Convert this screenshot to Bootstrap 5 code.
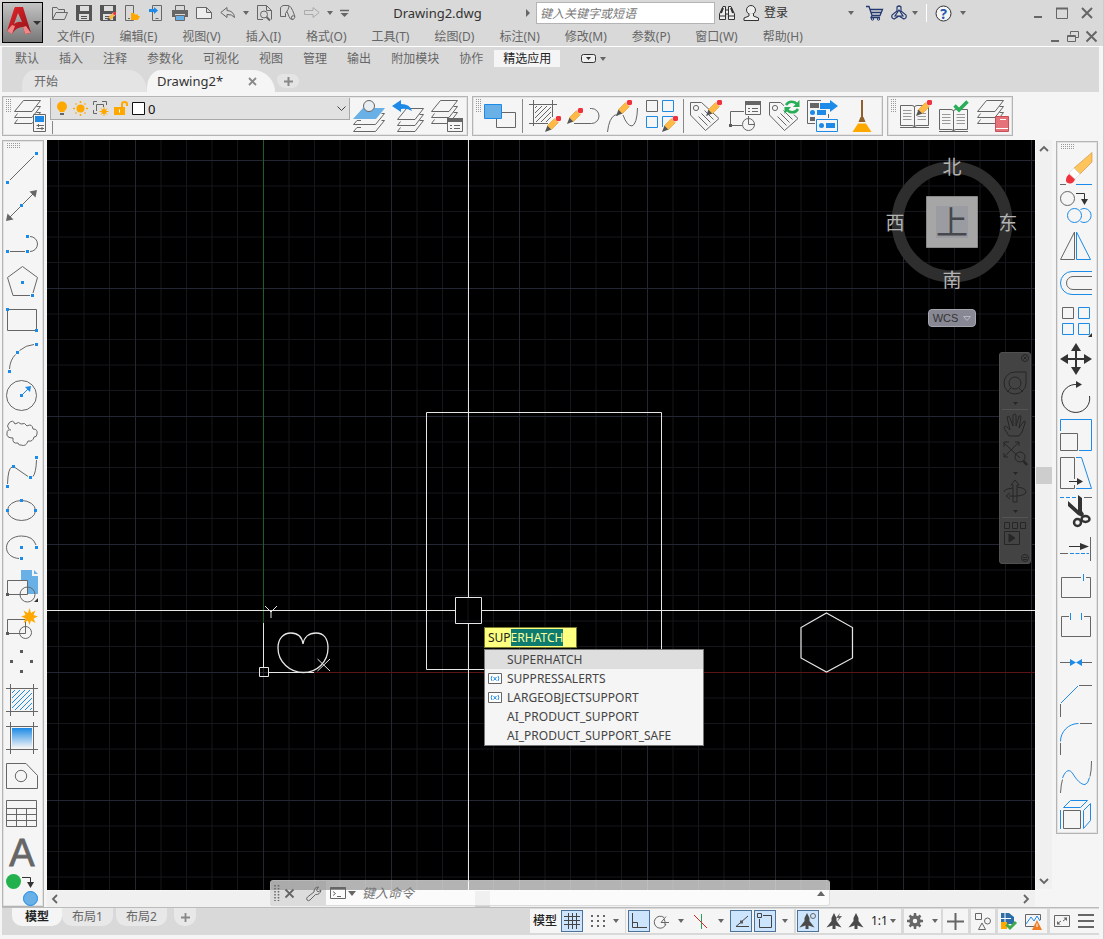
<!DOCTYPE html>
<html lang="zh-CN">
<head>
<meta charset="utf-8">
<meta name="viewport" content="width=device-width, initial-scale=1">
<title>Drawing2.dwg</title>
<link href="https://cdn.jsdelivr.net/npm/bootstrap@5.3.0/dist/css/bootstrap.min.css" rel="stylesheet">
<style>
body{font:12px/16px "Noto Sans","Noto Sans CJK SC",sans-serif;background:#f5f5f5;color:#666;overflow:hidden}
button{padding:0;border:0;background:none;color:inherit;font:inherit;line-height:0;flex:none}
a{color:inherit;text-decoration:none}
svg{display:block;fill:none;stroke:#666;stroke-width:1;flex:none;overflow:visible}
svg text{stroke:none}
.bl{stroke:#1c8ae6}
.kn{stroke:#1c8ae6;stroke-width:3;stroke-linecap:square}
.kg{stroke:#5a5a5a;stroke-width:3;stroke-linecap:square}
.fb{fill:#1c8ae6;stroke:none}
.fl{fill:#68b0e6;stroke:none}
.fg{fill:#666;stroke:none}
.fd{fill:#333;stroke:none}
.sd{stroke:#333}
.fo{fill:#ffa800;stroke:none}
.so{stroke:#ffa800}
.wf{fill:#f5f5f5}
.caret{width:0;height:0;border:3px solid transparent;border-top:4px solid #666;border-bottom:0;flex:none}

.topbar{background:#d9d9d9;border-bottom:1px solid #fff;padding:0 4px 0 2px;height:47px}
.logo{width:41px;height:41px;margin-top:2px;border:1px solid #000;background:linear-gradient(#c4c4c4,#777)}
.qrow{height:26px}
.quick{gap:8px;padding-left:9px;width:308px}
.doc-title{font-size:13px;color:#333;text-align:center}
.find{width:179px;height:22px;border:1px solid #b4b4b4;background:#fff;font-style:italic;padding:0 3px;color:#666;outline:0;border-radius:0}
.find::placeholder,.cmd input::placeholder{color:#777;opacity:1}
.info{gap:8px;color:#333;padding-left:4px;width:251px}
.mrow{height:21px;gap:25px;padding-left:14px}
.band{background:#d9d9d9;margin:0 4px 0 2px}
.rtabs{height:23px;padding:0 3px}
.rtabs a{padding:0 9px;margin:0 1px;line-height:17px}
.rtabs a.on{background:#f5f5f5;color:#222}
.ftabs{height:22px;padding-left:20px}
.ftab{height:22px;line-height:24px;background:#e4e4e4;border-radius:12px 18px 0 0/16px 22px 0 0;padding-left:12px;width:125px}
.ftab.on{background:#f5f5f5;color:#333;font-size:13px;width:128px;border-radius:14px 22px 0 0/18px 22px 0 0;padding:0 18px 0 10px}
.ftab.plus{width:22px;height:14px;margin-left:2px;border-radius:6px 8px 8px 10px;padding:0}

.bars{padding:4px 2px;gap:4px}
.tbar{border:1px solid #b4b4b4;height:40px;outline:1px solid #e4e4e4;outline-offset:-2px}
.tools{padding:0 3px 0 2px;gap:7px}
.grip-v{width:6px;height:14px;background:conic-gradient(#999 25%,transparent 0) 0 0/2px 2px;align-self:flex-start;margin:2px -4px 0 0;flex:none}
.grip-h{width:14px;height:6px;background:conic-gradient(#999 25%,transparent 0) 0 0/2px 2px;margin:0 0 3px;flex:none;align-self:flex-start}
.vr1{width:1px;height:34px;background:#888;flex:none}
.tools > .vr1{margin:0 -2px 0 -1px}
.layer{width:300px;height:23px;border:1px solid #a8a8a8;background:#e1e1e1;padding:0 3px 0 5px;gap:5px}
.layer select{appearance:none;border:0;background:none;padding:0;margin-left:-2px;color:#111;font-size:13px;line-height:20px;outline:0}

.side{width:42px;border:1px solid #b4b4b4;box-shadow:inset 0 0 0 1px #e2e2e2;padding:2px 3px 0;gap:6px;flex:none}
.side button{margin-right:2px}
.view{background:#000;min-width:0;min-height:0}
.vs{width:16px;background:#f0f0f0;margin:0 0 0 1px;padding:5px 1px 4px 0}
.hs{height:16px;background:#f0f0f0;margin-top:1px;padding:0 5px 0 4px}
.thumb-v{height:17px;width:16px;background:#cdcdcd;position:absolute;top:327px;left:0}
.thumb-h{height:16px;width:15px;background:#cdcdcd;position:absolute;left:428px;top:0}

.entry{position:absolute;left:437px;top:487px;width:220px}
.entry input{width:93px;height:21px;border:1px solid #77772c;border-radius:0;background:#ffff80;color:#222;padding:0 3px;outline:0;display:block;font-size:12px}
.entry input::selection{background:#0d7b70;color:#ffff9a}
.sugg{border:1px solid #777;background:#f5f5f5;margin-top:1px;color:#444}
.sugg button{height:19px;line-height:19px;padding-left:3px;gap:5px;text-align:left}
.sugg .sel{background:#dedede}
.sugg i{width:14px;flex:none}
.cube{position:absolute;right:14px;top:10px}
.wcs{position:absolute;right:59px;top:169px;width:48px;height:18px;border:1px solid #a5a5b0;border-radius:4px;background:#888894;color:#333;font:11px/14px "Liberation Sans",sans-serif;gap:5px}
.navbar2{position:absolute;right:4px;top:212px;width:32px;height:212px;background:#434343;border-radius:3px;border:1px solid #505050}
.navbar2 svg{stroke:#262626}
.cmd{position:absolute;left:223px;bottom:1px;width:560px;height:26px;background:rgba(255,255,255,.7);border:1px solid rgba(190,190,190,.5);border-radius:3px}
.cmd .hnd{width:55px;height:24px;background:rgba(150,150,150,.3);gap:12px;padding-left:3px}
.cmd input{background:none;border:0;outline:0;font-style:italic;font-size:13px;padding:0;height:20px}

.foot{background:#d9d9d9;margin:0 4px 4px 2px;height:28px;border-top:1px solid #bbb}
.ltab{height:18px;line-height:17px;background:#e8e8e8;padding:0 10px;border-radius:0 0 10px 10px;margin-right:3px;width:51px;text-align:center}
.ltab.on{background:#f5f5f5;color:#222;font-weight:600;margin:0;margin-left:10px;width:50px}
.stat{gap:3px;padding-top:1px}
.grp{background:#f5f5f5;height:24px;padding:0 3px}
.tg{width:22px;height:22px;display:flex;align-items:center;justify-content:center}
.tg.on{background:#cce4fc;border:1px solid #4d7299}
.page-edge{border-right:1px solid #ccc}
</style>
</head>
<body class="d-flex flex-column vh-100 page-edge">

<svg width="0" height="0" class="position-absolute" aria-hidden="true">
<defs>
<symbol id="pencil" viewBox="0 0 16 16"><path fill="#555" stroke="none" d="M0 16 2.500 9.500 6.500 13.500Z"/><path fill="#ffba45" stroke="#d99a30" stroke-width=".6" d="M2.500 9.500 9.500 2.500 13.500 6.500 6.500 13.500Z"/><path fill="#fff" stroke="none" d="M9.500 2.500 11.500.5 15.500 4.500 13.500 6.500Z"/><circle cx="13.500" cy="2.500" r="2.800" fill="#f0323c" stroke="none"/></symbol>
<symbol id="layers" viewBox="0 0 32 32"><path d="M9.500.5H26.500L18 11.500H.5ZM22.500 6.500H26.500L18 17.500H.5L3.500 13.500M22.500 12.500H26.500L18 23.500H.5L3.500 19.500"/></symbol>
<symbol id="tag" viewBox="0 0 32 32"><path d="M1.500 2.500H12.500L30 18.500 16.500 30.500 1.500 15ZM9.500 16.500 18.500 25.500M12.500 13.500 21.500 22.500M15.500 10.500 24.500 19.500"/><circle cx="7" cy="8" r="2.600"/></symbol>
<symbol id="panel" viewBox="0 0 16 14"><path class="wf" d="M.5.5H15.500V13.500H.5Z"/><path class="fg" d="M0 0H16V4H0Z"/><path d="M3 7.500H5M7 7.500H13M3 10.500H5M7 10.500H13" /></symbol>
<symbol id="book" viewBox="0 0 32 24"><path d="M1.500.5H13Q15.500.5 15.500 2.500Q15.500.5 18 .5H29.500V20.500H18Q15.500 20.500 15.500 22.500Q15.500 20.500 13 20.500H1.500ZM15.500 2V22"/><path stroke="#999" d="M4 5.500H12.500M4 8.500H12.500M4 11.500H12.500M4 14.500H12.500M18.500 5.500H27M18.500 8.500H27M18.500 11.500H27M18.500 14.500H27"/><path d="M1 22.500H30"/></symbol>
<symbol id="disk" viewBox="0 0 16 16"><path fill="#555" stroke="none" d="M0 0H16V16H1L0 15Z"/><path fill="#ddd" stroke="none" d="M4 1H13V6H4ZM3 9H13V15H3Z"/><path stroke="#555" d="M5 11.500H11M5 13.500H11"/></symbol>
<symbol id="comp" viewBox="0 0 16 16"><path fill="#4a4a4a" stroke="none" d="M8 0 10.500 5V8L15.500 14.500 9.500 12.500 9.500 16H6.500V12.500L.5 14.500 5.500 8V5Z"/></symbol>
<pattern id="hatch" width="5" height="5" patternUnits="userSpaceOnUse"><path d="M-1 6 6-1M-1 1 1-1M4 6 6 4" class="bl"/></pattern>
<pattern id="hatchg" width="5" height="5" patternUnits="userSpaceOnUse"><path d="M-1 6 6-1M-1 1 1-1M4 6 6 4" stroke="#666"/></pattern>
<linearGradient id="gr" x2="0" y2="1"><stop stop-color="#1c8ae6"/><stop offset="1" stop-color="#f5f5f5"/></linearGradient>
<linearGradient id="ar" x2="1" y2="1"><stop stop-color="#e8262c"/><stop offset="1" stop-color="#8c1218"/></linearGradient>
</defs></svg>

<header class="topbar d-flex">
  <button class="logo d-flex align-items-center" aria-label="应用程序菜单">
    <svg width="39" height="39"><path fill="url(#ar)" stroke="none" d="M12 4H20L28 30 22 31 20 24Q13 24 9 31L4 28 11 6ZM15 10 11 21Q15 18 19 19Z"/><path stroke="none" fill="#e88" d="M4 28 9 22 12 23 9 31ZM20 24 23 23 28 30 22 31Z"/><path fill="#333" stroke="none" d="M30 18H38L34 22Z"/></svg>
  </button>
  <div class="flex-grow-1">
    <div class="qrow d-flex align-items-center">
      <div class="quick d-flex align-items-center">
        <button aria-label="打开"><svg width="16" height="16"><path d="M.5 14.500V2.500H5L6.500 4.500H12.500V7.500M.5 14.500 4 7.500H15.500L12.500 14.500Z"/></svg></button>
        <button aria-label="保存"><svg width="16" height="16"><use href="#disk"/></svg></button>
        <button aria-label="另存为"><svg width="16" height="16"><use href="#disk"/><use href="#pencil" x="7" y="7" width="9" height="9"/></svg></button>
        <button aria-label="从移动设备打开"><svg width="16" height="16"><path d="M1.500.5H9.500V15.500H1.500ZM4 13.500H6"/><path class="fo" d="M7 14V8H10L11 9.500H14V11H16L14 15H7Z"/></svg></button>
        <button aria-label="保存到移动设备"><svg width="16" height="16"><path d="M4.500.5H13.500V15.500H4.500ZM7.500 13.500H10.500"/><path class="fb" d="M1 4H6V2L10 5.500 6 9V7H1Z"/></svg></button>
        <button aria-label="打印"><svg width="16" height="16"><path d="M3.500 6V.5H12.500V6"/><path class="fg" d="M0 5H16V12H13V9H3V12H0Z"/><path fill="#68b0e6" d="M3.500 10.500H12.500V15.500H3.500Z"/></svg></button>
        <button aria-label="新建"><svg width="16" height="16"><path fill="#eee" d="M.5 2.500H10.500L15.500 7.500V13.500H.5ZM10.500 2.500V7.500H15.500"/></svg></button>
        <button aria-label="放弃"><svg width="16" height="16"><path d="M7 2.500 .8 7.500 7 12.500V9.500Q12 9 14.500 12.500Q14 6 7 5.500Z"/></svg></button>
        <span class="caret" style="margin:0 -1px"></span>
        <button aria-label="查找"><svg width="16" height="16"><path d="M7 14.500H1.500V.5H10.500L15.500 5.500V14.500M10.500.5V5.500H15.500"/><circle cx="8" cy="9.500" r="3.500"/><path stroke-width="2" d="M10.500 12 14 15.500"/></svg></button>
        <button aria-label="特性匹配"><svg width="16" height="16"><path d="M5 11.500H.5V2.500L3 .5H8Q10 1 8 4.500L5.500 8.500V12M8 .5Q11 .5 14 9Q16 13 13 14.500Q10 15 9 11.500L7 6.500M12.500 14.500Q10.500 13 12 11Q14 10 15 12"/></svg></button>
        <button aria-label="重做"><svg width="16" height="16" style="stroke:#aaa"><path d="M9 2.500 15.200 7.500 9 12.500V9.500H.5V5.500H9Z"/></svg></button>
        <span class="caret" style="margin:0 -1px"></span>
        <button aria-label="自定义"><svg width="9" height="8"><path d="M0 1.500H9" stroke-width="1.500"/><path class="fg" d="M.5 4H8.500L4.500 8Z"/></svg></button>
      </div>
      <div class="doc-title flex-grow-1 ps-1">Drawing2.dwg</div>
      <svg width="16" height="8"><path class="fg" d="M6 0 10 4 6 8Z"/></svg>
      <input class="find" type="text" aria-label="搜索" placeholder="键入关键字或短语">
      <div class="info d-flex align-items-center">
        <button aria-label="搜索"><svg width="16" height="16"><path class="sd" fill="#eee" d="M2.500 5 4 1.500H6.500V14.500H.5V9ZM13.500 5 12 1.500H9.500V14.500H15.500V9ZM6.500 5H9.500V9H6.500M.5 11H6.500M9.500 11H15.500"/><path class="sd" stroke-width="2" d="M2 8 4 3M14 8 12 3"/></svg></button>
        <button class="d-flex align-items-center gap-1" aria-label="登录"><svg width="17" height="16"><circle cx="8" cy="5" r="4.500" class="sd" fill="#eee"/><path class="sd" fill="#eee" d="M6 9V11L1 13V15.500H15.500V13L10.500 11V9"/></svg><span>登录</span></button>
        <span class="caret ms-auto"></span>
        <button aria-label="商店" class="ms-1"><svg width="17" height="16"><path style="stroke:#243a70" stroke-width="1.300" d="M0 1.500H3L6 10.500H14L16.500 4.500H4.500M5 7.500H15M6 10.500 5 12.500H14"/><circle cx="6.500" cy="14" r="1.200" style="stroke:#243a70"/><circle cx="12.500" cy="14" r="1.200" style="stroke:#243a70"/></svg></button>
        <button aria-label="Autodesk"><svg width="16" height="16" style="stroke:#243a70"><path stroke-width="1.200" d="M6 2Q8 0 10 2V6L15 10Q16 13 13 14L8 11 3 14Q0 13 1 10L6 6ZM8 5 12 11H4Z"/></svg></button>
        <span class="caret" style="margin-left:-3px"></span>
        <span class="border-start border-white" style="height:18px"></span>
        <button aria-label="帮助"><svg width="17" height="17"><circle cx="8.500" cy="8.500" r="7.500" style="stroke:#333" fill="#f5f5f5"/><text x="8.500" y="13.500" text-anchor="middle" font-size="14" font-weight="700" fill="#2458b0">?</text></svg></button>
        <span class="caret"></span>
      </div>
      <div class="d-flex align-items-center ms-auto" style="gap:13px;padding:0 6px 0 68px">
        <button aria-label="最小化"><svg width="9" height="12"><path stroke-width="2" d="M0 10H8"/></svg></button>
        <button aria-label="最大化"><svg width="12" height="12"><path d="M.5 1.500H11.500V11.500H.5Z"/><path d="M0 1.500H12" stroke-width="2"/></svg></button>
        <button aria-label="关闭"><svg width="12" height="12"><path stroke-width="2" d="M1 1 11 11M11 1 1 11"/></svg></button>
      </div>
    </div>
    <nav class="mrow d-flex align-items-center" aria-label="菜单栏">
      <a href="#">文件(F)</a><a href="#">编辑(E)</a><a href="#">视图(V)</a><a href="#">插入(I)</a><a href="#">格式(O)</a><a href="#">工具(T)</a><a href="#">绘图(D)</a><a href="#">标注(N)</a><a href="#">修改(M)</a><a href="#">参数(P)</a><a href="#">窗口(W)</a><a href="#">帮助(H)</a>
      <div class="d-flex ms-auto align-items-center" style="gap:7px;padding-right:2px">
        <button aria-label="最小化文档"><svg width="9" height="11"><path stroke-width="2" d="M0 10H8"/></svg></button>
        <button aria-label="还原文档"><svg width="12" height="11"><path d="M3.500 3.500V.5H11.500V6.500H9M.5 4.500H8.500V10.500H.5ZM.5 5.500H8.500"/></svg></button>
        <button aria-label="关闭文档"><svg width="11" height="11"><path stroke-width="2" d="M.5.5 10.500 10.500M10.500.5.5 10.500"/></svg></button>
      </div>
    </nav>
  </div>
</header>

<div class="band">
  <nav class="rtabs d-flex align-items-center" aria-label="功能区">
    <a href="#">默认</a><a href="#">插入</a><a href="#">注释</a><a href="#">参数化</a><a href="#">可视化</a><a href="#">视图</a><a href="#">管理</a><a href="#">输出</a><a href="#">附加模块</a><a href="#">协作</a><a href="#" class="on">精选应用</a>
    <button class="d-flex align-items-center gap-1 ms-3 ps-1" aria-label="显示选项"><svg width="15" height="9"><rect x=".5" y=".5" width="14" height="8" rx="2" class="sd" fill="#eee"/><path class="fd" d="M5 3H10L7.500 6Z"/></svg><span class="caret"></span></button>
  </nav>
  <nav class="ftabs d-flex" aria-label="文件选项卡">
    <a href="#" class="ftab">开始</a>
    <div class="ftab on d-flex align-items-center justify-content-between"><a href="#">Drawing2*</a><button aria-label="关闭"><svg width="9" height="9"><path stroke-width="1.800" stroke="#888" d="M1 1 8 8M8 1 1 8"/></svg></button></div>
    <button class="ftab plus d-flex align-items-center justify-content-center align-self-end mb-1" aria-label="新图形"><svg width="9" height="9"><path stroke-width="2" stroke="#888" d="M4.500 0V9M0 4.500H9"/></svg></button>
  </nav>
</div>

<div class="bars d-flex">
  <div class="tbar tools d-flex align-items-center" style="width:466px">
    <span class="grip-v"></span>
    <button aria-label="图层特性"><svg width="32" height="32"><use href="#layers" width="32" height="32"/><path class="wf" d="M19.500 14.500H31.500V31.500H19.500Z"/><path class="fb" d="M21 16H30V22H21Z"/><path d="M22.500 25.500H30M22.500 28.500H30M24.500 24V27M28 27V30"/></svg></button>
    <div class="align-self-start" style="margin-left:-3px">
      <div class="layer d-flex align-items-center">
        <svg width="12" height="15"><circle cx="6" cy="5.500" r="5" class="fo"/><path class="fo" d="M3.500 9H8.500V11H3.500Z"/><path class="fg" d="M4 12H8V14H4Z"/></svg>
        <svg width="15" height="15"><circle cx="7.500" cy="7.500" r="4" class="fo"/><path class="so" stroke-width="1.500" d="M7.500 0V2M7.500 13V15M0 7.500H2M13 7.500H15M2.500 2.500 3.500 3.500M11.500 11.500 12.500 12.500M2.500 12.500 3.500 11.500M11.500 3.500 12.500 2.500"/></svg>
        <svg width="16" height="15"><path d="M.5 4V.5H4M9 .5H13.500V4M.5 9V12.500H4M3.500 10V3.500H10.500V6"/><circle cx="11" cy="10.500" r="2.500" class="fo"/><path class="so" d="M11 6V15M6.500 10.500H15.500M8 7.500 14 13.500M14 7.500 8 13.500"/></svg>
        <svg width="14" height="15"><path class="fo" d="M0 6H11V14H0Z"/><path class="so" stroke-width="2" d="M8 6V3Q8 1 10.500 1Q13 1 13 3V5"/><path stroke="#fff" d="M5.500 8.500V11.500"/></svg>
        <svg width="13" height="13" style="margin-left:-1px"><path style="stroke:#111" fill="#fff" d="M.5.5H12.500V12.500H.5Z"/></svg>
        <select class="flex-grow-1" aria-label="图层"><option>0</option></select>
        <svg width="9" height="6"><path stroke="#444" d="M.5.5 4.500 4.500 8.500.5"/></svg>
      </div>
      <div class="vr1" style="height:13px;margin:1px 0 0 2px"></div>
    </div>
    <button aria-label="图层匹配" style="margin-left:-4px"><svg width="32" height="32"><path class="fl" d="M10 8H32L23 19H0Z"/><circle cx="16" cy="6" r="5.500" fill="#e9eef2"/><path d="M28.500 13.500H31.500L22.500 24.500H.5L4 20.500H8M28.500 20.500H31.500L22.500 31.500H.5L4 27.500H8"/></svg></button>
    <button aria-label="上一个图层"><svg width="32" height="32"><g transform="translate(5 8)"><use href="#layers" width="32" height="32"/></g><path fill="#f5f5f5" stroke="none" d="M0 0H17V7H0Z"/><path class="fb" d="M0 6 9 0V4Q18 4 20 11Q15 8 9 9V12Z"/></svg></button>
    <button aria-label="图层状态"><svg width="32" height="32"><use href="#layers" width="32" height="32"/><use href="#panel" x="16" y="18" width="16" height="14"/></svg></button>
  </div>

  <div class="tbar tools d-flex align-items-center pe-1">
    <span class="grip-v"></span>
    <button aria-label="绘图次序"><svg width="32" height="32"><path d="M12.500 12.500H31.500V27.500H12.500Z"/><path fill="#68b0e6" class="bl" d="M.5 4.500H17.500V18.500H.5Z"/></svg></button>
    <span class="vr1"></span>
    <button aria-label="编辑图案填充"><svg width="32" height="32"><path fill="url(#hatchg)" stroke="none" d="M7 6H23V22H7Z"/><path d="M5.500 0V26M24.500 0V17M1 4.500H29M1 23.500H20"/><use href="#pencil" x="17" y="16" width="16" height="16"/></svg></button>
    <button aria-label="编辑多段线"><svg width="32" height="32"><path d="M7 23.500H24.500A7.500 7.500 0 0 0 24.500 8.500H23"/><use href="#pencil" y="8" width="16" height="16"/></svg></button>
    <button aria-label="编辑样条曲线"><svg width="32" height="32"><path d="M1.500 32Q3 18 9 15H12M17 15Q21 26 26 26Q31 24 31.500 8"/><use href="#pencil" x="10" width="16" height="16"/></svg></button>
    <button aria-label="编辑阵列"><svg width="32" height="32"><path d="M1.500.5H12.500V11.500H1.500Z"/><path class="bl" d="M17.500.5H28.500V11.500H17.500ZM1.500 16.500H12.500V27.500H1.500ZM17.500 27V16.500H28.500"/><use href="#pencil" x="17" y="16" width="16" height="16"/></svg></button>
    <span class="vr1"></span>
    <button aria-label="编辑属性" class="me-1"><svg width="32" height="32"><use href="#tag" width="32" height="32"/><use href="#pencil" x="17" width="16" height="16"/></svg></button>
    <button aria-label="块属性管理器" style="margin-left:-3px"><svg width="32" height="32"><path d="M15 11.500H1.500V25.500H13M19.500 16V24.500H26"/><circle cx="19.500" cy="24.500" r="6"/><path class="kg" d="M1.500 25.500h0"/><use href="#panel" x="16" y="1" width="16" height="14"/></svg></button>
    <button aria-label="同步属性"><svg width="32" height="32"><use href="#tag" width="32" height="32"/><circle cx="24" cy="7" r="8" fill="#f5f5f5" stroke="none"/><path stroke="#27ae57" stroke-width="2.500" d="M18 5Q21 0 27 2.500L30 5M30 9Q27 14 21 11.500L18 9"/><path fill="#27ae57" stroke="none" d="M31.500 0V7H25ZM16.500 14V7H23Z"/></svg></button>
    <button aria-label="数据提取"><svg width="32" height="32"><path d="M14 .5H.5V23.500H8M21.500 14V18"/><path class="fg" d="M3 3H12V8H3ZM3 17H8V21H3Z"/><path class="fb" d="M13 3H23V0L31 6 23 12V9H13ZM10 10H19V15H10Z"/><circle cx="5.500" cy="12.500" r="2.500" class="fb"/><path class="bl" d="M9.500 19.500H30.500V31.500H9.500Z"/><path class="fb" d="M19 23H28V28H19Z"/><circle cx="14.500" cy="25.500" r="2.500" class="fb"/></svg></button>
    <button aria-label="清理"><svg width="32" height="32"><path stroke="#8f5f2c" stroke-width="2" d="M16 0V18"/><path fill="#8f5f2c" stroke="none" d="M14.500 17H17.500L19.500 22H12.500Z"/><path class="fo" d="M12 23.500H20L25.500 32H6.500Z"/></svg></button>
  </div>

  <div class="tbar tools d-flex align-items-center">
    <span class="grip-v"></span>
    <button aria-label="编辑词典"><svg width="32" height="32"><use href="#book" y="5" width="32" height="24"/><use href="#pencil" x="17" width="16" height="16"/></svg></button>
    <button aria-label="检查标准"><svg width="32" height="32"><use href="#book" y="9" width="32" height="24"/><path stroke="#27ae57" stroke-width="3.500" d="M16.500 5.500 21 10 29.500 1.500"/></svg></button>
    <button aria-label="图层标准"><svg width="32" height="32"><use href="#layers" width="32" height="32"/><path stroke="#c94f56" fill="#e57278" d="M18.500 16.500H31.500V31.500H18.500Z"/><path stroke="#fff" d="M23 19.500H29M19 28.500H31"/></svg></button>
  </div>
</div>

<main class="d-flex flex-grow-1" style="min-height:0;padding-left:2px">
  <div class="side d-flex flex-column align-items-center" role="toolbar" aria-label="绘图">
    <span class="grip-h"></span>
    <div class="d-flex flex-column" style="gap:6px;margin-top:-6px">
    <button aria-label="直线"><svg width="32" height="32"><path d="M4 28 28 4"/><path class="kn" d="M1.500 30.500h0M30.500 1.500h0"/></svg></button>
    <button aria-label="构造线"><svg width="32" height="32"><path d="M4 27 27 4"/><path class="fg" d="M31 0 29.500 7.500 23.500 1.500ZM0 31 1.500 23.500 7.500 29.500Z"/><path class="kn" d="M15.500 15.500h0"/></svg></button>
    <button aria-label="多段线"><svg width="32" height="32"><path d="M4 23.500H19M24 8.500A7.500 7.500 0 0 1 24 23.500"/><path class="kn" d="M1.500 23.500h0M21.500 23.500h0M21.500 8.500h0"/></svg></button>
    <button aria-label="多边形"><svg width="32" height="32"><path d="M24 29.500H7L1.500 11.500 16.500.5 31.500 11.500 27 27"/><path class="kn" d="M16.500 16.500h0M26.500 29.500h0"/></svg></button>
    <button aria-label="矩形"><svg width="32" height="32"><path d="M1.500 5.500H30.500V26.500H1.500Z"/><path class="kn" d="M1.500 5.500h0M30.500 26.500h0"/></svg></button>
    <button aria-label="圆弧"><svg width="32" height="32"><path d="M3.500 27Q4 18 9.500 12.500M13.500 8.500Q20 3 28 2.500"/><path class="kn" d="M30.500 2.500h0M11.500 10.500h0M3.500 29.500h0"/></svg></button>
    <button aria-label="圆"><svg width="32" height="32"><circle cx="15.500" cy="15.500" r="15"/><path class="bl" d="M17 14 22 9"/><path class="fb" d="M25 6 24 12 19 7Z"/><path class="kn" d="M15.500 15.500h0"/></svg></button>
    <button aria-label="修订云线"><svg width="32" height="32"><path d="M3 11Q0 8 3 5Q7 1 9 6Q13 3 15 6Q19 4 21 8Q26 5 27 11Q32 11 31 16Q31 19 28 19Q27 24 22 23Q20 29 15 27Q13 28 12 25Q6 26 7 20Q0 20 1 15Q1 11 5 12"/></svg></button>
    <button aria-label="样条曲线"><svg width="32" height="32"><path d="M1.500 28Q2 12 6 11M9 11.500 22 20.500M27 20.500Q30 17 30.500 4"/><path class="kn" d="M1.500 30.500h0M7.500 10.500h0M24.500 21.500h0M30.500 1.500h0"/></svg></button>
    <button aria-label="椭圆"><svg width="32" height="32"><ellipse cx="15.500" cy="16.500" rx="14" ry="10"/><path class="kn" d="M15.500 6.500h0M1.500 16.500h0M29.500 16.500h0"/></svg></button>
    <button aria-label="椭圆弧"><svg width="32" height="32"><path d="M30 13Q27 4 15.500 4C7 4 .5 9 .5 15.500S6 26 13 26.500"/><path class="kn" d="M15.500 15.500h0M30.500 15.500h0M15.500 26.500h0"/></svg></button>
    <button aria-label="插入块"><svg width="32" height="32"><path class="fl" d="M15 0H26V6H32V24H15Z"/><path class="fl" d="M28 0 32 4H28Z"/><path fill="#f5f5f5" d="M1.500 10.500H21.500V24.500H1.500Z"/><circle cx="21.500" cy="24.500" r="7.500"/><path class="kg" d="M1.500 24.500h0"/><path class="fd" d="M32 28V32H28Z"/></svg></button>
    <button aria-label="创建块"><svg width="32" height="32"><path d="M1.500 11.500H19.500V25.500H1.500Z"/><circle cx="19.500" cy="24.500" r="6"/><path class="kg" d="M1.500 25.500h0"/><path class="fo" d="M23.500 0 25 5 29.500 2.500 27.500 7 32 8.500 27.500 10.500 29.500 15 25 12.500 23.500 17 22 12.500 17.500 15 19.500 10.500 15 8.500 19.500 7 17.500 2.500 22 5Z"/></svg></button>
    <button aria-label="点"><svg width="32" height="32"><path class="kg" d="M15.500 5.500h0M5.500 15.500h0M25.500 15.500h0M15.500 25.500h0"/></svg></button>
    <button aria-label="图案填充"><svg width="32" height="32"><path fill="url(#hatch)" stroke="none" d="M6 6H26V26H6Z"/><path d="M4.500 0V32M27.500 0V32M0 4.500H32M0 27.500H32"/></svg></button>
    <button aria-label="渐变色"><svg width="32" height="32"><path fill="url(#gr)" stroke="none" d="M6 6H26V26H6Z"/><path d="M4.500 0V32M27.500 0V32M0 4.500H32M0 27.500H32"/></svg></button>
    <button aria-label="面域"><svg width="32" height="32"><path d="M.5 3.500H20L31.500 15.500V28.500H.5Z"/><circle cx="15" cy="16" r="5.700"/></svg></button>
    <button aria-label="表格"><svg width="32" height="32"><path d="M.5 2.500H30.500V28.500H.5ZM.5 10.500H30.500M.5 16.500H30.500M.5 22.500H30.500M10.500 10.500V28.500M20.500 10.500V28.500"/></svg></button>
    <button aria-label="多行文字"><svg width="32" height="32"><text x="16" y="30" text-anchor="middle" font-family="Liberation Sans" font-size="38" fill="#666" style="stroke:#666;stroke-width:.8">A</text></svg></button>
    <button aria-label="添加选定对象"><svg width="32" height="32"><circle cx="7.500" cy="7.500" r="7.500" fill="#22b14c" stroke="none"/><path class="sd" d="M16 3.500H24.500V9"/><path class="fd" d="M21 8H28L24.500 14Z"/><circle cx="24.500" cy="24.500" r="7" fill="#68b0e6" class="bl"/></svg></button>
    </div>
  </div>

  <div class="d-flex flex-column flex-grow-1 position-relative" style="margin-left:3px;min-width:0">
    <div class="view flex-grow-1 position-relative overflow-hidden">
      <svg width="100%" height="100%" style="stroke:#e6e6e6" aria-label="模型空间">
        <defs><pattern id="grid" x="216" y="532" width="128" height="128" patternUnits="userSpaceOnUse"><path stroke="#15151b" d="M26 0V128M51.500 0V128M77 0V128M102.500 0V128M0 26H128M0 51.500H128M0 77H128M0 102.500H128"/><path stroke="#242632" d="M.5 0V128M0 .5H128"/></pattern></defs>
        <rect width="100%" height="100%" fill="url(#grid)" stroke="none"/>
        <path stroke="#1d6023" d="M216.500 0V483"/><path stroke="#5c1414" d="M267 532.500H2000"/>
        <path d="M379.500 272.500H614.500V529.500H379.500Z"/>
        <path d="M0 470.500H408M434 470.500H2000M421.500 0V457M421.500 484V2000M408.500 457.500H434.500V483.500H408.500Z"/>
        <path d="M216.500 483V528M222 532.500H267M212.500 527.500H221.500V536.500H212.500ZM218 466 224 472 230 466M224 472V478M270.500 519 283 531M283 519 270.500 531"/>
        <path stroke-width="1.300" d="M256 504C255 497 251 493 244 493C236 493 231 499 231 508C231 522 243 532.500 256.500 532.500S281 522 281 508C281 499 277 493 269 493C262 493 257 497 256 504Z"/>
        <path stroke-width="1.200" d="M779.500 473 805.500 487.500V518L779.500 532 754 518V487.500Z"/>
      </svg>
      <div class="entry">
        <input id="dyn" type="text" value="SUPERHATCH" aria-label="命令输入">
        <div class="sugg d-flex flex-column" role="listbox">
          <button class="sel d-flex align-items-center"><i></i>SUPERHATCH</button>
          <button class="d-flex align-items-center"><svg width="14" height="11"><path fill="#fff" d="M.5.5H13.500V10.500H.5Z"/><path class="bl" d="M4 3Q2.500 5.500 4 8M10 3Q11.500 5.500 10 8M5.500 4 8.500 7.500M8.500 4 5.500 7.500"/></svg>SUPPRESSALERTS</button>
          <button class="d-flex align-items-center"><svg width="14" height="11"><path fill="#fff" d="M.5.5H13.500V10.500H.5Z"/><path class="bl" d="M4 3Q2.500 5.500 4 8M10 3Q11.500 5.500 10 8M5.500 4 8.500 7.500M8.500 4 5.500 7.500"/></svg>LARGEOBJECTSUPPORT</button>
          <button class="d-flex align-items-center"><i></i>AI_PRODUCT_SUPPORT</button>
          <button class="d-flex align-items-center"><i></i>AI_PRODUCT_SUPPORT_SAFE</button>
        </div>
      </div>
      <svg class="cube" width="138" height="144" font-size="19">
        <circle cx="69" cy="72" r="54.500" fill="none" stroke="#2e2e2e" stroke-width="12"/>
        <path fill="#a6a6a6" stroke="#888" d="M43.500 46.500H94.500V97.500H43.500Z"/><path fill="#9a9ca2" stroke="none" d="M53 56H85V88H53Z"/>
        <g fill="#b4b4b4"><text x="69" y="24" text-anchor="middle">北</text><text x="69" y="137" text-anchor="middle">南</text><text x="12" y="80" text-anchor="middle">西</text><text x="125" y="80" text-anchor="middle">东</text></g>
        <text x="69" y="84" text-anchor="middle" font-size="32" fill="#46484d">上</text>
      </svg>
      <button class="wcs d-flex align-items-center justify-content-center">WCS<svg width="8" height="5"><path stroke="#b8b8c4" d="M.5.5H7.500L4 4.500Z"/></svg></button>
      <div class="navbar2" role="toolbar" aria-label="导航栏">
        <svg width="30" height="210">
          <circle cx="25" cy="5" r="3.500"/><path d="M23.500 3.500 26.500 6.500M26.500 3.500 23.500 6.500"/>
          <path d="M15 19H26V30A11 11 0 1 1 15 19Z"/><circle cx="15" cy="30" r="6"/><path d="M11 35 7 39M19 35 23 39"/>
          <path fill="#262626" stroke="none" d="M13 49H18L15.500 52ZM13 119H18L15.500 122ZM13 157H18L15.500 160Z"/><path stroke="#555" d="M2 56.500H28M2 164.500H28"/>
          <path d="M9 83 4 75Q4 72 7 74L10 77 7 64Q9 62 10 65L13 73V62Q15 60 16 62V73L19 63Q21 62 21 64L19 75 24 68Q26 68 25 70L22 79 19 83Z"/>
          <path d="M4 90 20 105M19 89 4 104M4 94V89H9M15 89H19V93M4 100V104H8"/><circle cx="20" cy="104" r="5"/><path stroke-width="2.500" d="M23.500 108 27 112"/>
          <path d="M13 149V132H11L15 127 19 132H17V149ZM17 134Q26 135 26 139Q25 144 9 143M13 135Q4 136 4 139M10 140 6 143 10 146"/>
          <path d="M4.500 169.500H9.500V175.500H4.500ZM12.500 169.500H17.500V175.500H12.500ZM20.500 169.500H25.500V175.500H20.500ZM4.500 178.500H19.500V191.500H4.500Z"/><path fill="#262626" d="M9 181 15 185 9 189Z"/><circle cx="25" cy="205" r="3.500"/><path d="M23 204.500H27M23 206.500H27"/>
        </svg>
      </div>
    </div>
    <div class="hs d-flex align-items-center justify-content-between position-relative">
      <button aria-label="向左滚动"><svg width="8" height="8"><path stroke-width="1.800" d="M6 0 2 4 6 8"/></svg></button>
      <span class="thumb-h"></span>
      <button aria-label="向右滚动"><svg width="8" height="8"><path stroke-width="1.800" d="M2 0 6 4 2 8"/></svg></button>
    </div>
    <div class="cmd d-flex align-items-center">
      <div class="hnd d-flex align-items-center">
        <svg width="6" height="16" stroke="#555"><path stroke-width="1.500" stroke-dasharray="1.500 1.500" d="M1 0V16M4.500 0V16"/></svg>
        <button aria-label="关闭" style="margin-left:-7px"><svg width="9" height="9"><path stroke-width="1.800" d="M.5.5 8.500 8.500M8.500.5.5 8.500"/></svg></button>
        <button aria-label="自定义"><svg width="15" height="15"><path d="M1 14Q0 12 1.500 11L8 6Q8 1 12.500 1L10.500 4 12 6 15 4Q14 9 9.500 8.500L4 14Q2.500 15.500 1 14Z"/></svg></button>
      </div>
      <button class="d-flex align-items-center ms-1" style="gap:2px" aria-label="最近命令"><svg width="16" height="12"><path d="M.5.5H15.500V11.500H.5Z"/><path stroke-width="2" d="M0 1.500H16"/><path d="M3 4.500 5.500 6.500 3 8.500M7 9.500H11"/></svg><svg width="8" height="5"><path class="fg" d="M0 0H8L4 5Z"/></svg></button>
      <input class="flex-grow-1" style="margin-left:6px" type="text" aria-label="命令行" placeholder="键入命令">
      <svg width="8" height="5" class="me-1"><path class="fg" d="M0 5H8L4 0Z"/></svg>
    </div>
  </div>

  <div class="vs position-relative d-flex flex-column justify-content-between align-items-center" style="margin-bottom:18px">
    <svg width="8" height="8"><path stroke-width="1.800" d="M0 6 4 2 8 6"/></svg>
    <span class="thumb-v"></span>
    <svg width="8" height="6"><path stroke-width="1.800" d="M0 0 4 4 8 0"/></svg>
  </div>

  <div class="side d-flex flex-column align-items-center align-self-start" style="margin:1px 5px 0 4px;padding-bottom:2px" role="toolbar" aria-label="修改">
    <span class="grip-h"></span>
    <div class="d-flex flex-column" style="gap:6px;margin-top:-6px">
    <button aria-label="删除"><svg width="32" height="32"><path fill="#ffc55c" stroke="#c98d3a" stroke-width=".6" d="M32-.5V9L20 21 14 15Z"/><path fill="#fff" stroke="#ccc" stroke-width=".5" d="M14 15 20 21 15 26 9 20Z"/><path fill="#f0323c" stroke="none" d="M9 21 15 26.500Q13 31 9.500 30.500Q5.500 30 6 26.500Q6 24 9 21Z"/><path d="M0 31.500H6"/><path class="bl" d="M16 31.500H32"/></svg></button>
    <button aria-label="复制"><svg width="32" height="32"><circle cx="7.500" cy="7.500" r="7"/><path class="sd" d="M16 2.500H24.500V8"/><path class="fd" d="M21 8H28L24.500 14Z"/><circle cx="14.500" cy="24.500" r="7" class="bl"/><path class="bl" d="M20.500 18.500A7 7 0 1 1 20.500 30.500"/></svg></button>
    <button aria-label="镜像"><svg width="32" height="32"><path d="M14.500 3V30.500H.5Z"/><path class="bl" d="M16.500 3V30.500H30.500Z"/></svg></button>
    <button aria-label="偏移"><svg width="32" height="32"><path class="bl" d="M32 4.500H12A11.500 11.500 0 0 0 12 27.500H32"/><path d="M32 9.500H13A6.500 6.500 0 0 0 13 22.500H32"/></svg></button>
    <button aria-label="阵列"><svg width="32" height="32"><path d="M2.500 2.500H13.500V13.500H2.500Z"/><path class="bl" d="M18.500 2.500H29.500V13.500H18.500ZM2.500 18.500H13.500V29.500H2.500ZM18.500 18.500H29.500V29.500H18.500Z"/><path class="fd" d="M32 28V32H28Z"/></svg></button>
    <button aria-label="移动"><svg width="32" height="32"><path class="sd" stroke-width="2" d="M16 5V27M5 16H27"/><path class="fd" d="M16 0 21 8H11ZM16 32 11 24H21ZM0 16 8 11V21ZM32 16 24 21V11Z"/></svg></button>
    <button aria-label="旋转"><svg width="32" height="32"><path class="sd" d="M17 3.500A14 14 0 1 0 29.500 15"/><path class="fd" d="M16 0 22 3.500 16 7Z"/></svg></button>
    <button aria-label="缩放"><svg width="32" height="32"><path class="bl" d="M.5 12V.5H31.500V31.500H19"/><path d="M.5 14.500H17.500V31.500H.5Z"/></svg></button>
    <button aria-label="拉伸"><svg width="32" height="32"><path d="M14.500 22V.5H.5V31.500H14.500V28"/><path class="bl" d="M16 .5H21.500L31.500 31.500H16"/><path class="sd" d="M9 24.500H18"/><path class="fd" d="M17 21 23 24.500 17 28Z"/></svg></button>
    <button aria-label="修剪"><svg width="32" height="32"><path class="bl" stroke-dasharray="4 2" d="M0 2.500H17"/><path d="M24 2.500H32"/><path class="fd" d="M18 0 22 3V16L24 19 22 22 18 20 8 11V6L18 15Z"/><circle cx="17.500" cy="27.500" r="3.500" class="sd" stroke-width="2.500"/><ellipse cx="25.500" cy="24" rx="4" ry="3" class="sd" stroke-width="2.500"/></svg></button>
    <button aria-label="延伸"><svg width="32" height="32"><path d="M30.500 4V28M0 20.500H8"/><path class="bl" stroke-dasharray="4 1.500" d="M10 20.500H29"/><path class="sd" d="M9 13.500H24"/><path class="fd" d="M20 10 29 13.500 20 17Z"/></svg></button>
    <button aria-label="打断于点"><svg width="32" height="32"><path d="M21 6.500H1.500V26.500H30.500V6.500H26"/><path class="bl" d="M23.500 3V10"/></svg></button>
    <button aria-label="打断"><svg width="32" height="32"><path d="M9 7.500H1.500V27.500H30.500V7.500H24"/><path class="bl" d="M10.500 4V11M21.500 4V11"/></svg></button>
    <button aria-label="合并"><svg width="32" height="32"><path d="M0 15.500H10M22 15.500H32"/><path class="fb" d="M10 12 16 15.500 10 19ZM22 12 16 15.500 22 19Z"/></svg></button>
    <button aria-label="倒角"><svg width="32" height="32"><path d="M19 .5H32M.5 19V32"/><path class="bl" d="M1 18 18 1"/></svg></button>
    <button aria-label="圆角"><svg width="32" height="32"><path d="M20 .5H32M.5 20V32"/><path class="bl" d="M.5 18.500A18 18 0 0 1 18.500.5"/></svg></button>
    <button aria-label="光顺曲线"><svg width="32" height="32"><path d="M31.500 0Q31.500 10 30 15.500M.5 32Q1 23 2.500 18.500"/><path class="bl" d="M2.500 17C6 8 10 8 13 13S21 24 25 23.500Q28 23 29.500 16.500"/></svg></button>
    <button aria-label="分解"><svg width="32" height="32"><path d="M3.500 11.500H20.500V29.500H3.500Z"/><path class="bl" d="M.5 11V30M3.500 8.500 10.500 1.500H27.500L20.500 8.500ZM23.500 11.500 30.500 4.500V21.500L23.500 29.500Z"/></svg></button>
    </div>
  </div>
</main>

<footer class="foot d-flex">
  <nav class="d-flex" aria-label="布局">
    <a href="#" class="ltab on">模型</a><a href="#" class="ltab">布局1</a><a href="#" class="ltab">布局2</a>
    <button class="ltab d-flex align-items-center justify-content-center" style="width:22px;padding:0;margin-left:4px" aria-label="新建布局"><svg width="9" height="9"><path stroke-width="1.800" stroke="#888" d="M4.500 0V9M0 4.500H9"/></svg></button>
  </nav>
  <div class="stat d-flex ms-auto">
    <div class="grp d-flex align-items-center gap-1 pe-2" style="width:95px">
      <button style="color:#222;font-weight:500">模型</button>
      <button class="tg on" aria-label="栅格"><svg width="16" height="16"><path d="M4.500 0V16M8.500 0V16M12.500 0V16M0 3.500H16M0 7.500H16M0 11.500H16" style="stroke:#444"/></svg></button>
      <button class="tg" aria-label="捕捉"><svg width="14" height="14"><path stroke-width="2" stroke-dasharray="2 4" d="M0 2H14M0 7H14M0 12H14"/></svg></button>
      <span class="caret ms-auto"></span>
    </div>
    <div class="grp d-flex align-items-center" style="width:168px;padding:0 6px 0 2px;margin-left:-2px">
      <button class="tg on" aria-label="正交"><svg width="16" height="16"><path style="stroke:#444" d="M1.500 0V14.500H16M1.500 9.500H6.500V14.500"/></svg></button>
      <button class="tg" aria-label="极轴"><svg width="15" height="15"><path d="M12 10A6 6 0 1 1 10 3.500M7 8.500H15M7 8.500 12 2.500M10 5Q11.500 7 11 11"/></svg></button>
      <span class="caret" style="margin:0 6px"></span>
      <button class="tg" aria-label="等轴测"><svg width="14" height="15"><path stroke="#22a455" d="M7.500 0V15"/><path stroke="#d22" d="M0 1 13 14"/></svg></button>
      <span class="caret" style="margin:0 6px"></span>
      <button class="tg on" aria-label="对象捕捉追踪"><svg width="16" height="16"><path style="stroke:#444" d="M15 3 3 13.500H16"/><path class="kg" d="M8.500 9h0"/></svg></button>
      <button class="tg on" style="margin-left:2px" aria-label="对象捕捉"><svg width="16" height="16"><path style="stroke:#444" d="M.5.5H4.500V4.500H.5ZM6 2.500H14.500V14.500H2.500V6"/></svg></button>
      <span class="caret ms-auto"></span>
    </div>
    <div class="grp d-flex align-items-center" style="width:105px;padding:0 5px 0 1px;margin-left:-1px">
      <button class="tg on" aria-label="注释可见性"><svg width="18" height="16"><use href="#comp" width="16" height="16"/><circle cx="14" cy="3" r="2.500"/></svg></button>
      <button class="tg ms-1" aria-label="自动缩放"><svg width="16" height="16"><use href="#comp" width="16" height="16"/><path class="fg" d="M14 0 10 5H13L11 9 16 3H13Z"/></svg></button>
      <button class="tg" aria-label="注释比例"><svg width="16" height="16"><use href="#comp" width="16" height="16"/></svg></button>
      <button class="ms-1" style="color:#222">1:1</button><span class="caret ms-auto"></span>
    </div>
    <div class="grp d-flex align-items-center justify-content-between" style="width:37px;padding:0 3px"><button aria-label="设置"><svg width="16" height="16"><circle cx="8" cy="8" r="4" stroke-width="3.500"/><path stroke-width="2.500" d="M8 0V3M8 13V16M0 8H3M13 8H16M2.500 2.500 4.500 4.500M11.500 11.500 13.500 13.500M2.500 13.500 4.500 11.500M11.500 4.500 13.500 2.500"/></svg></button><span class="caret"></span></div>
    <div class="grp d-flex align-items-center" style="width:25px;padding:0 4px;margin-left:-1px"><button aria-label="监视器"><svg width="17" height="17"><path stroke-width="2" d="M8.500 0V17M0 8.500H17"/></svg></button></div>
    <div class="grp d-flex align-items-center" style="width:24px;padding:0 4px"><button aria-label="隔离对象"><svg width="17" height="17"><path d="M.5.5H6.500V6.500H.5ZM7 10 10.500 16.500H3.500Z"/><circle cx="12.500" cy="8" r="3"/></svg></button></div>
    <div class="grp d-flex align-items-center gap-2" style="width:49px;padding:0 2px"><button aria-label="标准"><svg width="17" height="17"><path fill="#2d6da8" stroke="none" d="M1 0H9L14 4V11H1Z"/><path stroke="#fff" d="M1 5.500H11M5 0V9"/><path class="fo" d="M1 9H7V16H1Z"/><path stroke="#3faa4d" stroke-width="3" d="M6.500 11.500 10 15 16 9"/></svg></button><button aria-label="性能"><svg width="17" height="17"><path d="M9 13.500H.5V1.500H15.500V7"/><path class="bl" d="M1 11 6 4 9 8 12 3 15 8"/><path fill="#f27c22" stroke="none" d="M12 7 17 17H7Z"/><path stroke="#fff" d="M12 10.500V14"/></svg></button></div>
    <div class="grp d-flex align-items-center gap-2" style="width:49px;padding:0 4px"><button aria-label="全屏"><svg width="16" height="12"><path d="M.5.5H15.500V11.500H.5ZM3 9 7 6M9 6 13 3"/><path class="fg" d="M3 6V9.500H6.500ZM13 6V2.500H9.500Z"/></svg></button><button aria-label="自定义状态栏"><svg width="16" height="14"><path stroke-width="2" d="M0 1H16M0 7H16M0 13H16"/></svg></button></div>
  </div>
</footer>

<script src="https://cdn.jsdelivr.net/npm/bootstrap@5.3.0/dist/js/bootstrap.bundle.min.js"></script>
<script>
// Keep the typed prefix and select the auto-completed remainder.
const dyn = document.getElementById('dyn');
dyn.focus({preventScroll: true});
dyn.setSelectionRange(3, dyn.value.length);
</script>
</body>
</html>
